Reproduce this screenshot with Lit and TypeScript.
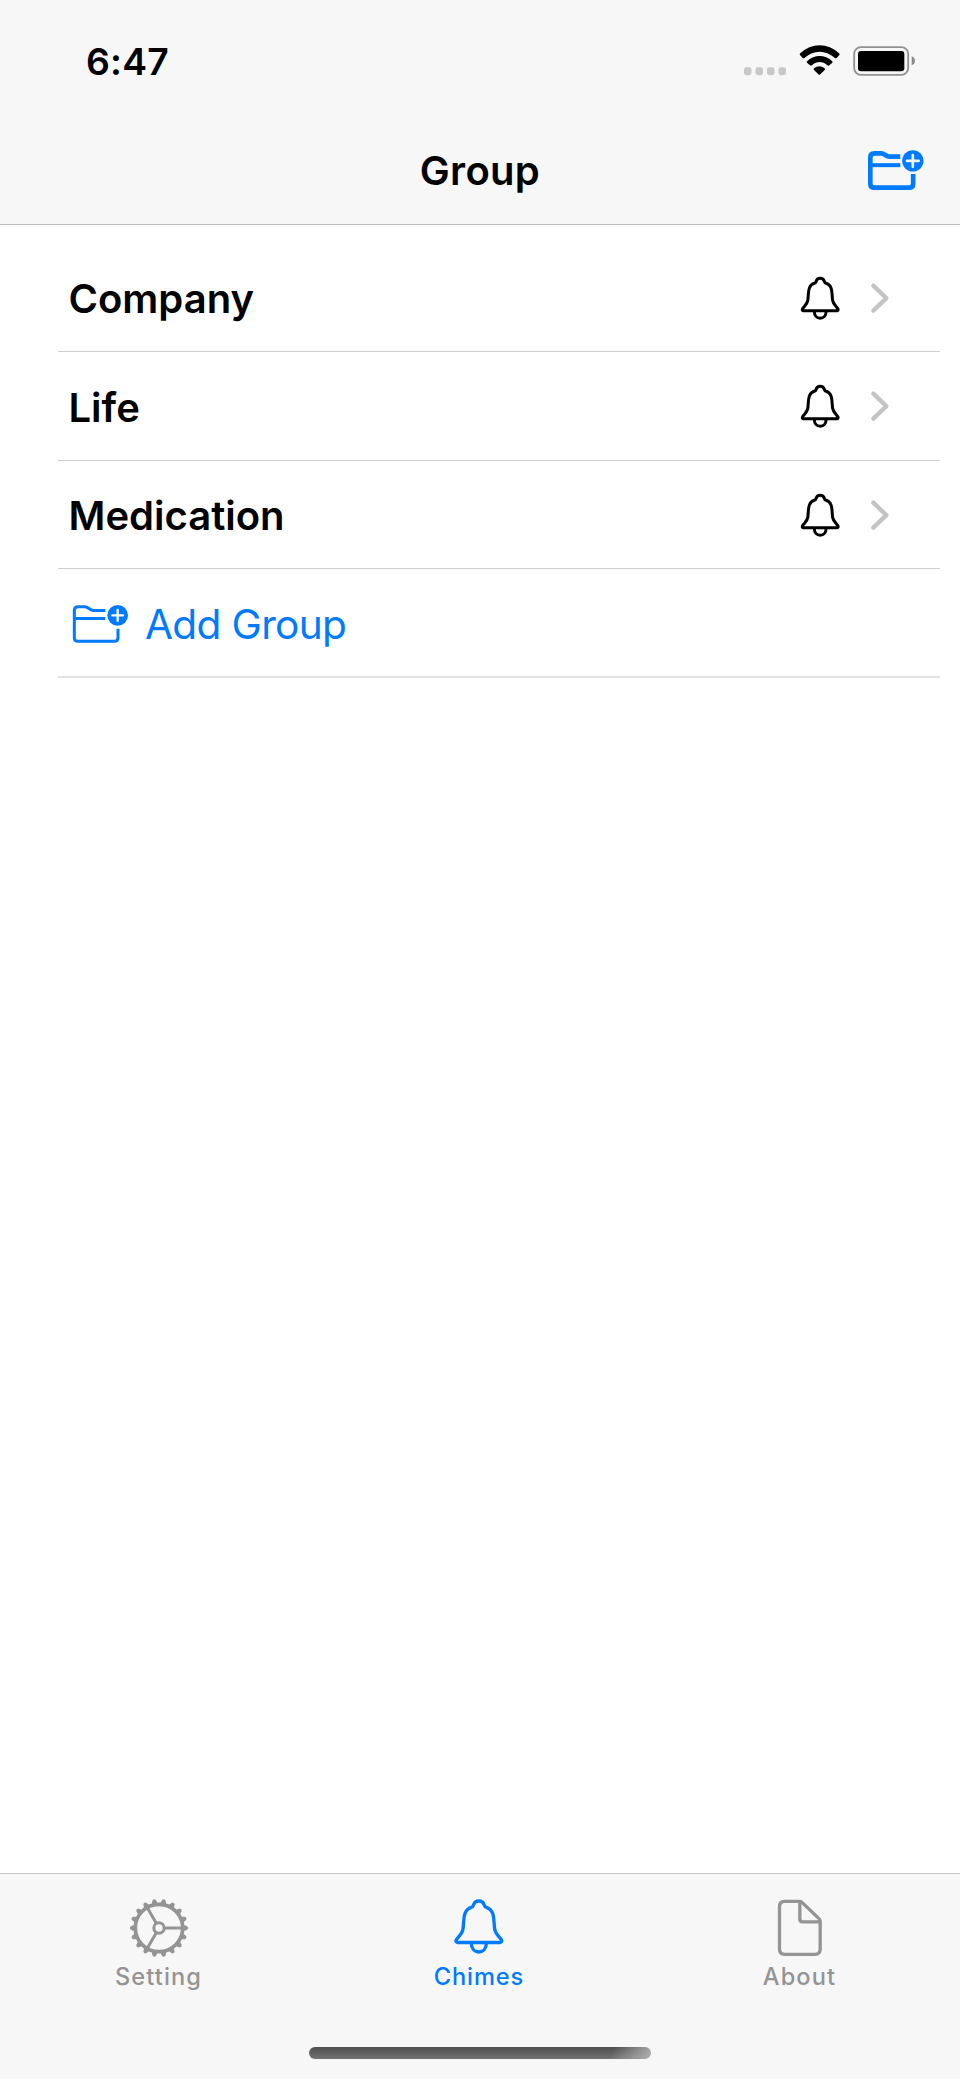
import { LitElement, html, css, svg } from "lit";
import { customElement, property } from "lit/decorators.js";

@customElement("bell-icon")
export class BellIcon extends LitElement {
  @property({ type: Number }) weight = 10;
  static styles = css`
    :host { display: block; }
    svg { display: block; width: 100%; height: 100%; overflow: visible; }
  `;
  render() {
    return html`<svg viewBox="129 111 156 171" fill="none" stroke="currentColor" stroke-width=${this.weight} stroke-linejoin="round">
      <path d="M142 244.5H271Q277 243 274.5 237C270 228 256 220 254 204C251 180 253 170 248 157C244 147 236 141 229 139Q224 138 222 131C220 124 213 120 206.5 120C200 120 193 124 191 131Q189 138 184 139C177 141 169 147 165 157C160 170 162 180 159 204C157 220 143 228 138.500 237Q136 243 142 244.500Z" />
      <path d="M184 247C184 262 193 273 206.500 273C220 273 229 262 229 247" />
    </svg>`;
  }
}

@customElement("folder-plus-icon")
export class FolderPlusIcon extends LitElement {
  @property({ type: Boolean }) bold = false;
  static styles = css`
    :host { display: block; }
    svg { display: block; width: 100%; height: 100%; }
  `;
  render() {
    return this.bold
      ? html`<svg viewBox="81 57 171 126" fill="none" stroke="currentColor" stroke-width="14">
          <path d="M181 80H148C138 80 134 70 124 70H103Q91 70 91 82V161Q91 173 103 173H207Q219.500 173 219.500 161V132" />
          <path d="M91 105.500H181" stroke-width="12" />
          <circle cx="218.500" cy="92.500" r="32" fill="currentColor" stroke="none" />
          <path d="M201 92.500H236M218.500 75V110" stroke="#f7f7f7" stroke-width="8" stroke-linecap="round" />
        </svg>`
      : html`<svg viewBox="66 72 171 120" fill="none" stroke="currentColor" stroke-width="9">
          <path d="M166 91.500H130C119 91.500 115 80 105 80H85Q73 80 73 91V173Q73 184 85 184H192Q204 184 204 173V146" />
          <path d="M73 115.500H166" />
          <circle cx="203" cy="106" r="31" fill="currentColor" stroke="none" />
          <path d="M187 106H219M203 90V122" stroke="#fff" stroke-width="7" stroke-linecap="round" />
        </svg>`;
  }
}

const TEETH = Array.from({ length: 18 }, (_, i) => i * 20);
const SPOKES = [0, 120, 240];

@customElement("gear-icon")
export class GearIcon extends LitElement {
  static styles = css`
    :host { display: block; }
    svg { display: block; width: 100%; height: 100%; }
  `;
  render() {
    return html`<svg viewBox="-90 -90 180 180" fill="none" stroke="currentColor">
      <circle r="71" stroke-width="11" />
      <circle r="15.500" stroke-width="9" />
      ${SPOKES.map((a) => svg`<path d="M18 0H70" stroke-width="9" transform="rotate(${a})" />`)}
      ${TEETH.map((a) => svg`<path d="M73 -9.500L85 -5Q90 0 85 5L73 9.500Z" fill="currentColor" stroke="none" transform="rotate(${a})" />`)}
    </svg>`;
  }
}

@customElement("page-icon")
export class PageIcon extends LitElement {
  static styles = css`
    :host { display: block; }
    svg { display: block; width: 100%; height: 100%; }
  `;
  render() {
    return html`<svg viewBox="138 114 138 174" fill="none" stroke="currentColor" stroke-width="10" stroke-linejoin="round">
      <path d="M161 121H206Q210 121 213 124L264 173Q267.500 176.500 267.500 181V264Q267.500 280 252 280H161Q145.500 280 145.500 264V137Q145.500 121 161 121Z" />
      <path d="M206.500 122V174Q206.500 182.500 215 182.500H266" />
    </svg>`;
  }
}

@customElement("status-bar")
export class StatusBar extends LitElement {
  static styles = css`
    :host { display: flex; justify-content: space-between; align-items: center; height: 122px; padding: 0 43px 0 86px; box-sizing: border-box; }
    .time { font-size: 37.300px; font-weight: 600; letter-spacing: 0.200px; line-height: 46px; margin-top: 1px; }
    svg { display: block; width: 174px; height: 32px; }
  `;
  render() {
    return html`
      <span class="time">6:47</span>
      <svg viewBox="69 44 522 96">
        <g fill="#c8c8c8">
          ${[72, 106.5, 141, 175.5].map((x) => svg`<rect x=${x} y="111" width="22.500" height="23.500" rx="7" />`)}
        </g>
        <g fill="#000">
          <path d="M240 74Q238 71 241 69C274 37 324 37 357 69Q360 71 358 74L350 83Q347 85 344 82C317 58 281 58 254 82Q251 85 248 83Z" />
          <path d="M261 97Q259 94 262 92C283 72 315 72 336 92Q339 94 337 97L328 105Q325 107 322 105C308 92 290 92 276 105Q273 107 270 105Z" />
          <path d="M282 119Q279 116 283 113Q298 103 313 113Q317 116 314 119L301 132Q298 135 295 132Z" />
        </g>
        <rect x="402.500" y="50.500" width="162" height="83" rx="20" fill="none" stroke="#929292" stroke-width="5.500" />
        <rect x="414" y="62" width="139" height="61" rx="9" fill="#000" />
        <path d="M575 78Q585 82 585 91.500Q585 101 575 105Z" fill="#8a8a8a" />
      </svg>
    `;
  }
}

@customElement("nav-bar")
export class NavBar extends LitElement {
  static styles = css`
    :host { display: grid; grid-template-columns: 1fr auto 1fr; align-items: center; height: 103px; box-sizing: border-box; padding: 0 36px; border-bottom: 1px solid #bfbfbf; }
    h1 { grid-column: 2; margin: -5px 0 0; font-size: 40px; font-weight: 600; line-height: 48px; letter-spacing: 0.300px; }
    folder-plus-icon { justify-self: end; width: 57px; height: 42px; margin-top: -6px; color: #007aff; }
  `;
  render() {
    return html`<h1>Group</h1><folder-plus-icon bold></folder-plus-icon>`;
  }
}

@customElement("group-list")
export class GroupList extends LitElement {
  static styles = css`
    :host { display: block; padding: 19px 20px 0 58px; }
    .row { display: flex; align-items: center; height: 108px; box-sizing: border-box; padding: 0 50px 0 10.500px; border-bottom: 1px solid #d0d0d2; font-size: 40px; line-height: 48px; }
    .tall { height: 109px; }
    .name { flex: 1; font-weight: 600; letter-spacing: 0; margin-top: 3px; }
    bell-icon { width: 40.700px; height: 44.600px; margin: 1px 29px 0 0; }
    .chevron { display: block; width: 20px; height: 32px; }
    .add { padding-left: 14px; border-bottom: 2px solid #e3e3e4; color: #007aff; }
    .add folder-plus-icon { width: 57px; height: 40px; margin-top: 2px; }
    .label { font-size: 40.600px; letter-spacing: -0.650px; margin: 5px 0 0 16px; }
  `;
  render() {
    return html`
      ${["Company", "Life", "Medication"].map(
        (name, i) => html`<div class="row ${i === 1 ? "tall" : ""}">
          <span class="name">${name}</span>
          <bell-icon weight="11.5"></bell-icon>
          <svg class="chevron" viewBox="270 66 60 96" fill="none" stroke="#c4c4c6" stroke-width="13" stroke-linecap="round" stroke-linejoin="round"><path d="M280 77L319 114.500L280 152" /></svg>
        </div>`
      )}
      <div class="row tall add">
        <folder-plus-icon></folder-plus-icon>
        <span class="label">Add Group</span>
      </div>
    `;
  }
}

@customElement("tab-bar")
export class TabBar extends LitElement {
  static styles = css`
    :host { display: flex; flex-direction: column; height: 206px; box-sizing: border-box; border-top: 1px solid #c6c6c6; background: #f7f7f7; }
    .tabs { display: grid; grid-template-columns: 317px 324px 317px; padding-top: 24px; }
    .tab { display: flex; flex-direction: column; align-items: center; color: #949494; font-size: 23.600px; font-weight: 500; letter-spacing: 1.100px; line-height: 28px; }
    .active { color: #007aff; letter-spacing: 0.900px; }
    .glyph { display: flex; height: 60px; align-items: center; justify-content: center; margin-bottom: 5px; }
    gear-icon { width: 60px; height: 60px; }
    bell-icon { width: 52px; height: 57px; margin-top: -3px; }
    page-icon { width: 46px; height: 58px; margin-top: -1px; }
    .indicator { width: 342px; height: 12px; margin: auto auto 20px; border-radius: 6px; background: linear-gradient(115deg, transparent 88%, #b0b0b0 100%), linear-gradient(#505050, #727272); }
  `;
  render() {
    return html`
      <div class="tabs">
        <div class="tab"><span class="glyph"><gear-icon></gear-icon></span>Setting</div>
        <div class="tab active"><span class="glyph"><bell-icon></bell-icon></span>Chimes</div>
        <div class="tab"><span class="glyph"><page-icon></page-icon></span>About</div>
      </div>
      <div class="indicator"></div>
    `;
  }
}

@customElement("app-root")
export class AppRoot extends LitElement {
  static styles = css`
    :host { display: flex; flex-direction: column; width: 960px; height: 2079px; background: #fff; color: #000; font-family: Inter, "Liberation Sans", sans-serif; }
    header { background: #f7f7f7; }
    group-list { flex: 1; }
  `;
  render() {
    return html`
      <header><status-bar></status-bar><nav-bar></nav-bar></header>
      <group-list></group-list>
      <tab-bar></tab-bar>
    `;
  }
}
